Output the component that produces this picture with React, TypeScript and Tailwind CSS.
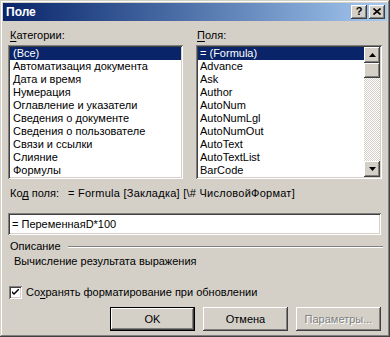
import React from "react";

const raised =
  "shadow-[inset_-1px_-1px_0_#404040,inset_1px_1px_0_#ffffff,inset_-2px_-2px_0_#808080,inset_2px_2px_0_#d4d0c8]";
const sunken =
  "shadow-[inset_1px_1px_0_#808080,inset_-1px_-1px_0_#ffffff,inset_2px_2px_0_#404040,inset_-2px_-2px_0_#d4d0c8]";

const cats = [
  "(Все)",
  "Автоматизация документа",
  "Дата и время",
  "Нумерация",
  "Оглавление и указатели",
  "Сведения о документе",
  "Сведения о пользователе",
  "Связи и ссылки",
  "Слияние",
  "Формулы",
];
const fields = [
  "= (Formula)",
  "Advance",
  "Ask",
  "Author",
  "AutoNum",
  "AutoNumLgl",
  "AutoNumOut",
  "AutoText",
  "AutoTextList",
  "BarCode",
];

function Arrow({ up }: { up?: boolean }) {
  return (
    <svg width="7" height="4" viewBox="0 0 7 4">
      {up ? <path d="M3.5 0 L7 4 L0 4 Z" fill="#000" /> : <path d="M0 0 L7 0 L3.5 4 Z" fill="#000" />}
    </svg>
  );
}

export default function App() {
  return (
    <div
      className={`w-[390px] h-[337px] bg-[#d4d0c8] p-[3px] flex flex-col text-[11px] text-black leading-[13px] shadow-[inset_-1px_-1px_0_#404040,inset_1px_1px_0_#d4d0c8,inset_-2px_-2px_0_#808080,inset_2px_2px_0_#ffffff] overflow-hidden`}
      style={{ fontFamily: '"Liberation Sans", Arial, sans-serif' }}
    >
      {/* Title bar */}
      <div className="h-[18px] flex items-center justify-between bg-gradient-to-r from-[#0a246a] to-[#a6caf0] pl-[3px] pr-[2px]">
        <span className="text-white font-bold text-[12px]">Поле</span>
        <div className="flex gap-[2px]">
          <div className={`w-[16px] h-[14px] bg-[#d4d0c8] ${raised} flex items-center justify-center text-[11px] font-bold leading-none pb-[1px]`}>
            ?
          </div>
          <div className={`w-[16px] h-[14px] bg-[#d4d0c8] ${raised} flex items-center justify-center pb-[1px]`}>
            <svg width="8" height="7" viewBox="0 0 8 7">
              <path d="M0.5 0.5 L7.5 6.5 M7.5 0.5 L0.5 6.5" stroke="#000" strokeWidth="1.6" />
            </svg>
          </div>
        </div>
      </div>

      {/* Lists */}
      <div className="flex mt-[8px] pl-[5px]">
        <div className="w-[175px] flex flex-col">
          <div className="h-[13px] pl-[2px]">
            <span className="underline underline-offset-[2px]">К</span>атегории:
          </div>
          <div className={`mt-[3px] h-[134px] bg-white ${sunken} p-[2px] flex flex-col`}>
            {cats.map((c, i) => (
              <div
                key={c}
                className={`h-[13px] pl-[3px] whitespace-nowrap ${i === 0 ? "bg-[#0a246a] text-white" : ""}`}
              >
                {c}
              </div>
            ))}
          </div>
        </div>
        <div className="w-[186px] ml-[13px] flex flex-col">
          <div className="h-[13px] pl-[1px]">
            <span className="underline underline-offset-[2px]">П</span>оля:
          </div>
          <div className={`mt-[3px] h-[134px] bg-white ${sunken} p-[2px] flex`}>
            <div className="flex-1 flex flex-col">
              {fields.map((c, i) => (
                <div
                  key={c}
                  className={`h-[13px] pl-[2px] whitespace-nowrap ${i === 0 ? "bg-[#0a246a] text-white" : ""}`}
                >
                  {c}
                </div>
              ))}
            </div>
            <div className="w-[16px] flex flex-col bg-[repeating-conic-gradient(#d4d0c8_0%_25%,#ffffff_0%_50%)] bg-[length:2px_2px]">
              <div className={`h-[16px] bg-[#d4d0c8] ${raised} flex items-center justify-center`}>
                <Arrow up />
              </div>
              <div className={`h-[15px] bg-[#d4d0c8] ${raised}`} />
              <div className="flex-1" />
              <div className={`h-[16px] bg-[#d4d0c8] ${raised} flex items-center justify-center`}>
                <Arrow />
              </div>
            </div>
          </div>
        </div>
      </div>

      {/* Field code */}
      <div className="mt-[8px] h-[13px] pl-[7px] flex whitespace-nowrap">
        <span>
          Ко<span className="underline underline-offset-[2px]">д</span> поля:
        </span>
        <span className="ml-[9px] tracking-[0.25px]">= Formula [Закладка] [\# ЧисловойФормат]</span>
      </div>

      <div className={`mt-[13px] ml-[5px] w-[373px] h-[22px] bg-white ${sunken} flex items-center pl-[4px]`}>
        = ПеременнаяD*100
      </div>

      {/* Description */}
      <div className="mt-[5px] h-[13px] pl-[7px] flex items-center">
        <span>Описание</span>
        <div className="ml-[7px] mr-[4px] flex-1 h-[2px] border-t border-t-[#808080] border-b border-b-white" />
      </div>
      <div className="mt-[2px] h-[13px] pl-[11px]">Вычисление результата выражения</div>

      {/* Checkbox */}
      <div className="mt-[18px] h-[13px] pl-[6px] flex items-center">
        <div className={`w-[13px] h-[13px] bg-white ${sunken} flex items-center justify-center`}>
          <svg width="7" height="7" viewBox="0 0 7 7">
            <path d="M0 2 L0 4 L2 6 L7 1 L7 -1 L2 4 Z" fill="#000" />
          </svg>
        </div>
        <span className="ml-[4px]">
          Со<span className="underline underline-offset-[2px]">х</span>ранять форматирование при обновлении
        </span>
      </div>

      {/* Buttons */}
      <div className="mt-[8px] flex pl-[107px] gap-[8px]">
        <div className="w-[85px] h-[24px] border border-black">
          <div className={`w-full h-full bg-[#d4d0c8] ${raised} flex items-center justify-center`}>OK</div>
        </div>
        <div className={`w-[85px] h-[24px] bg-[#d4d0c8] ${raised} flex items-center justify-center`}>Отмена</div>
        <div className={`w-[85px] h-[24px] bg-[#d4d0c8] ${raised} flex items-center justify-center text-[#808080] [text-shadow:1px_1px_0_#ffffff]`}>
          Параметры...
        </div>
      </div>
    </div>
  );
}
